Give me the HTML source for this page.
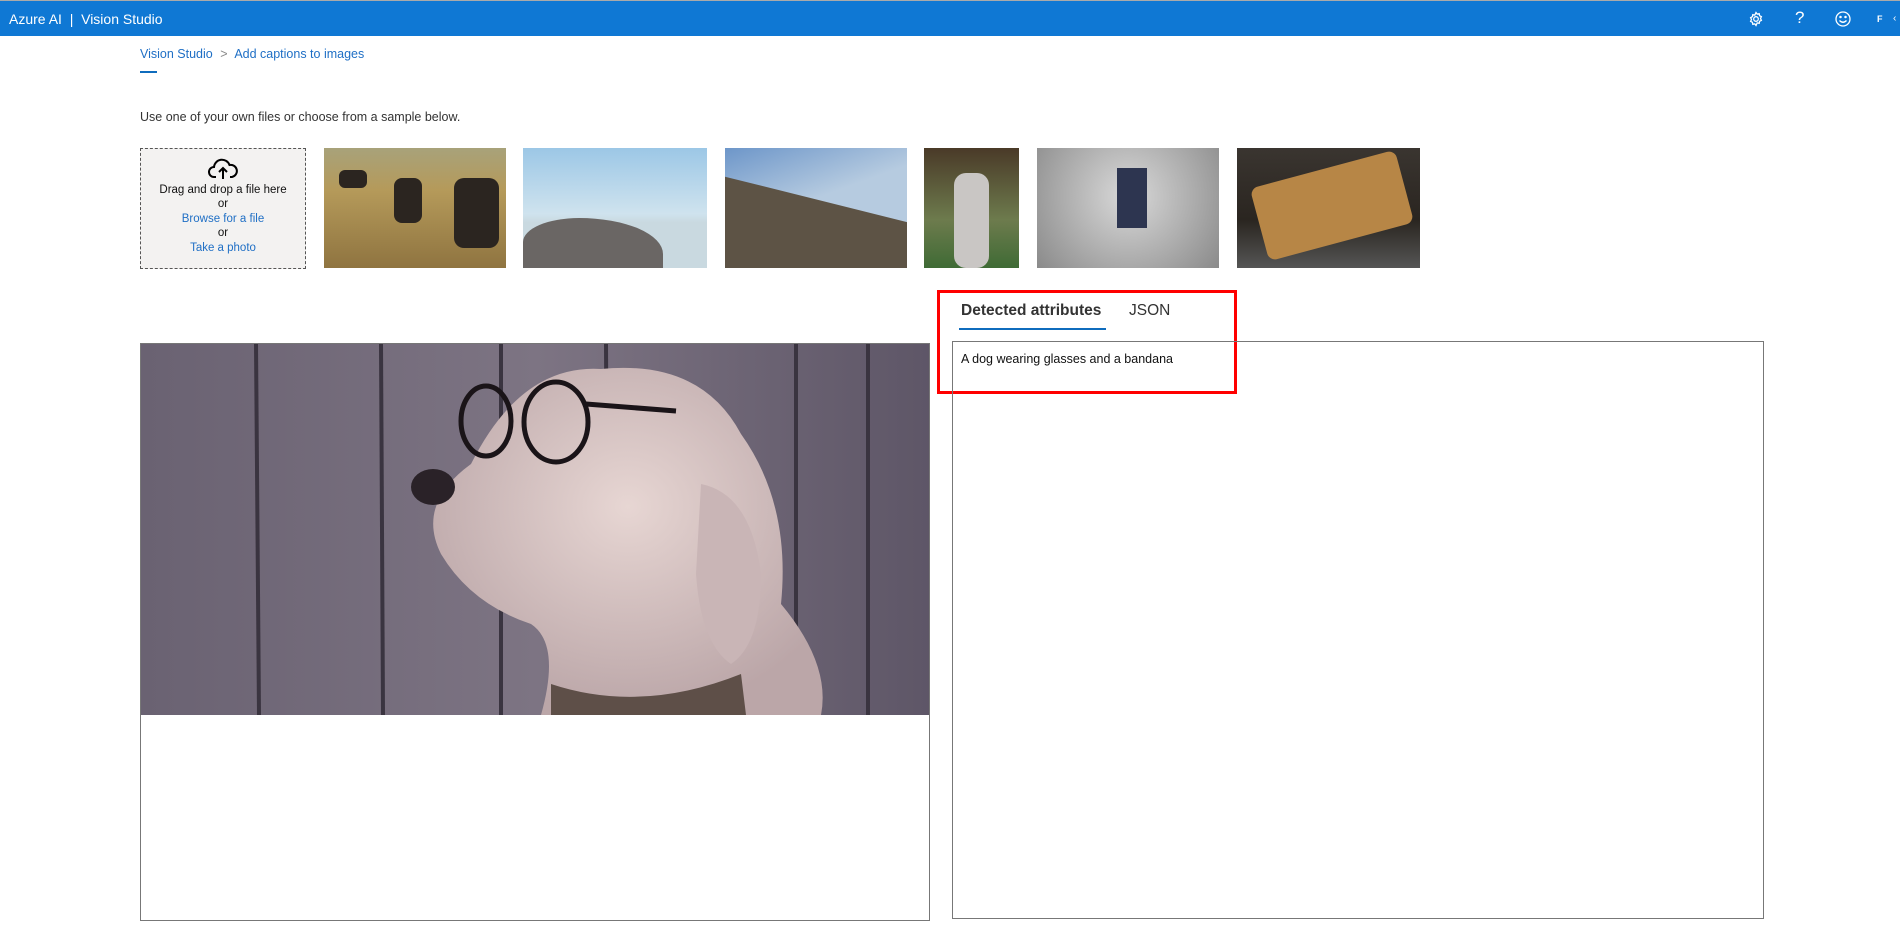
<!DOCTYPE html>
<html><head><meta charset="utf-8"><style>
body{margin:0;width:1900px;height:951px;background:#fff;font-family:"Liberation Sans",sans-serif;position:relative;overflow:hidden}
.hdr{position:absolute;left:0;top:0;width:1900px;height:36px;background:#0f78d4;border-top:1px solid #aaa;box-sizing:border-box}
.hdr .t{position:absolute;left:9px;top:10px;color:#fff;font-size:14px}
.a{position:absolute;font-size:13px}
.thumb{position:absolute;top:148px;height:120px;overflow:hidden}
</style></head><body>
<div class="hdr"><div class="t">Azure AI&nbsp; | &nbsp;Vision Studio</div>
<svg style="position:absolute;left:1748px;top:10px" width="16" height="16" viewBox="0 0 16 16" fill="none" stroke="#fff" stroke-width="1.3"><circle cx="8" cy="8" r="2.3"/><path d="M8 1.5l1.2 1.6 2-.4.4 2 1.8 1-.9 1.8.9 1.8-1.8 1-.4 2-2-.4L8 14.5l-1.2-1.6-2 .4-.4-2-1.8-1 .9-1.8-.9-1.8 1.8-1 .4-2 2 .4z"/></svg>
<div style="position:absolute;left:1795px;top:7px;color:#fff;font-size:17px">?</div>
<svg style="position:absolute;left:1835px;top:10px" width="16" height="16" viewBox="0 0 16 16" fill="none" stroke="#fff" stroke-width="1.3"><circle cx="8" cy="8" r="7"/><circle cx="5.5" cy="6" r=".6" fill="#fff"/><circle cx="10.5" cy="6" r=".6" fill="#fff"/><path d="M4.5 9.5q3.5 3.5 7 0"/></svg>
<div style="position:absolute;left:1877px;top:13px;color:#fff;font-size:9px;font-weight:bold">F</div>
<div style="position:absolute;left:1893px;top:12px;color:#fff;font-size:10px">&#8249;</div>
</div>
<div class="a" style="left:140px;top:47px;color:#1f6fc5;font-size:12.5px">Vision Studio <span style="color:#888;margin:0 4px">&gt;</span> Add captions to images</div>
<div style="position:absolute;left:140px;top:71px;width:17px;height:2px;background:#0f6cbd"></div>
<div class="a" style="left:140px;top:110px;color:#333;font-size:12.5px">Use one of your own files or choose from a sample below.</div>
<div style="position:absolute;left:140px;top:148px;width:166px;height:121px;box-sizing:border-box;border:1px dashed #555;background:#f3f2f1;text-align:center;font-size:11.5px;line-height:14.5px;color:#111">
<svg style="margin-top:8px" width="32" height="24" viewBox="0 0 32 24" fill="none" stroke="#000" stroke-width="2"><path d="M9 20H7a5 5 0 010-10 8 8 0 0115.5-2A6 6 0 0125 20h-2"/><path d="M16 22V11M12 15l4-4 4 4"/></svg>
<div style="margin-top:-3px">Drag and drop a file here<br>or<br><span style="color:#1f6fc5">Browse for a file</span><br>or<br><span style="color:#1f6fc5">Take a photo</span></div></div>
<div class="thumb" style="left:324px;width:182px;background:linear-gradient(#a8a27a,#b59a5a 35%,#8f7440)"><div style="position:absolute;left:70px;top:30px;width:28px;height:45px;background:#2b2520;border-radius:8px"></div><div style="position:absolute;left:130px;top:30px;width:45px;height:70px;background:#2b2520;border-radius:10px"></div><div style="position:absolute;left:15px;top:22px;width:28px;height:18px;background:#2b2520;border-radius:6px"></div></div>
<div class="thumb" style="left:523px;width:184px;background:linear-gradient(#9cc7e6,#cfe3ee 55%,#c9d9e0 62%)"><div style="position:absolute;left:0;top:70px;width:140px;height:60px;background:#6a6664;border-radius:40% 60% 0 0"></div></div>
<div class="thumb" style="left:725px;width:182px;background:linear-gradient(160deg,#6d96c9,#b6cbe0 45%)"><div style="position:absolute;left:-20px;top:55px;width:240px;height:90px;background:#5d5345;transform:rotate(14deg)"></div></div>
<div class="thumb" style="left:924px;width:95px;background:linear-gradient(#4a3a28,#6d7b4d 60%,#3f6b35)"><div style="position:absolute;left:30px;top:25px;width:35px;height:95px;background:#c9c6c4;border-radius:12px"></div></div>
<div class="thumb" style="left:1037px;width:182px;background:radial-gradient(circle at 50% 40%,#d9d9d9,#8a8a8a)"><div style="position:absolute;left:80px;top:20px;width:30px;height:60px;background:#2d3550"></div></div>
<div class="thumb" style="left:1237px;width:183px;background:linear-gradient(#3a3530,#2a2520 60%,#555)"><div style="position:absolute;left:20px;top:20px;width:150px;height:75px;background:#b78646;border-radius:8px;transform:rotate(-15deg)"></div></div>
<div style="position:absolute;left:937px;top:290px;width:300px;height:104px;box-sizing:border-box;border:3px solid #f00"></div>
<div class="a" style="left:961px;top:302px;font-size:15.5px;font-weight:bold;color:#333">Detected attributes</div>
<div class="a" style="left:1129px;top:302px;font-size:15.5px;color:#333">JSON</div>
<div style="position:absolute;left:959px;top:328px;width:147px;height:2px;background:#0f6cbd"></div>
<div style="position:absolute;left:952px;top:341px;width:812px;height:578px;box-sizing:border-box;border:1px solid #777"></div>
<div class="a" style="left:961px;top:352px;color:#111;font-size:12.5px">A dog wearing glasses and a bandana</div>
<div style="position:absolute;left:140px;top:343px;width:790px;height:578px;box-sizing:border-box;border:1px solid #777;overflow:hidden">
<svg width="790" height="371" viewBox="0 0 790 371" style="display:block">
<defs><linearGradient id="f" x1="0" x2="1"><stop offset="0" stop-color="#6a6272"/><stop offset=".5" stop-color="#7d7483"/><stop offset="1" stop-color="#5e5667"/></linearGradient>
<radialGradient id="d" cx=".5" cy=".4" r=".6"><stop offset="0" stop-color="#e7d6d3"/><stop offset="1" stop-color="#bba6a8"/></radialGradient></defs>
<rect width="790" height="371" fill="url(#f)"/>
<g stroke="#3a3440" stroke-width="4"><line x1="115" y1="0" x2="118" y2="371"/><line x1="240" y1="0" x2="242" y2="371"/><line x1="360" y1="0" x2="360" y2="371"/><line x1="465" y1="0" x2="467" y2="371"/><line x1="655" y1="0" x2="655" y2="371"/><line x1="727" y1="0" x2="727" y2="371"/></g>
<path d="M330 120 Q380 20 460 25 Q560 15 600 90 Q650 160 640 260 Q690 320 680 371 L400 371 Q420 300 390 280 Q330 260 300 210 Q275 160 330 120Z" fill="url(#d)"/>
<path d="M560 140 Q610 150 620 230 Q620 300 590 320 Q560 300 555 230Z" fill="#c9b5b6"/>
<ellipse cx="292" cy="143" rx="22" ry="18" fill="#2a2228"/>
<path d="M410 340 Q500 370 600 330 L605 371 L410 371Z" fill="#5e4f48"/>
<g fill="none" stroke="#1a1418" stroke-width="5"><ellipse cx="345" cy="77" rx="25" ry="35"/><ellipse cx="415" cy="78" rx="32" ry="40"/><path d="M445 60 L535 67"/></g>
</svg></div>
</body></html>
